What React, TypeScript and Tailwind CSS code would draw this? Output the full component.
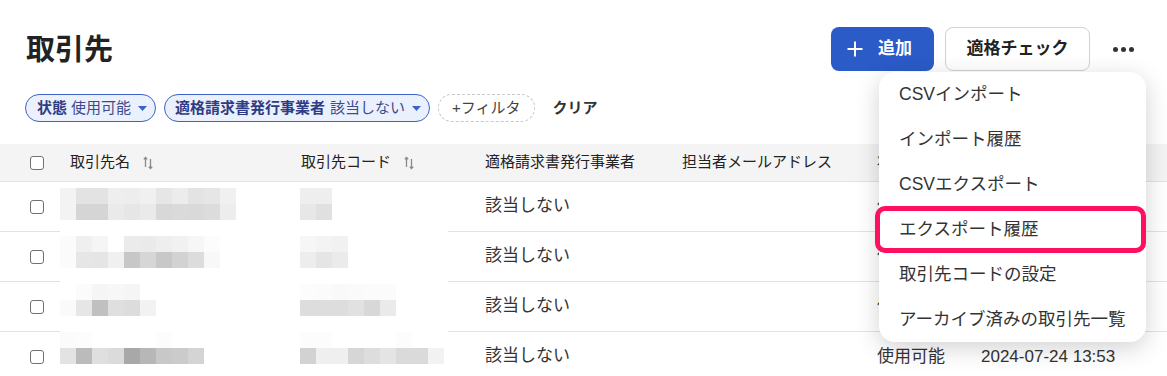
import React from "react";

const FONT = { fontFamily: '"Liberation Sans", "Noto Sans CJK JP", sans-serif' };

// redaction mosaic: one entry per 16px band, grays for the name and code cells
const MOSAIC: { name: string[]; code: string[] }[] = [
  { name: ["f3", "e3", "e3", "ee", "ed", "f0", "e6", "ec", "e3", "e6", "f0"], code: ["ee", "ee"] },
  { name: ["f3", "d5", "d5", "ea", "e6", "ea", "d8", "da", "d9", "dc", "ed"], code: ["e7", "e0"] },
  { name: [], code: [] },
  { name: ["fb", "ef", "f5", "ff", "eb", "ea", "ee", "f1", "f6", "fc"], code: ["f6", "f3", "f1"] },
  { name: ["fb", "e6", "e5", "f0", "c7", "d6", "c8", "d2", "dc", "f8"], code: ["ed", "e5", "eb"] },
  { name: [], code: [] },
  { name: ["ff", "fb", "f5", "f7", "f5"], code: ["fc", "fb", "f9", "fa", "fb", "fb"] },
  { name: ["fa", "e6", "c0", "df", "dc", "f2"], code: ["dd", "dd", "dd", "e1", "d8", "ea"] },
  { name: [], code: [] },
  { name: ["fb", "fc", "ff", "ff", "ff", "ff", "fc", "ff", "ff"], code: ["fc", "fc", "ff", "ff", "ff", "ff", "fc", "ff", "ff"] },
  { name: ["e3", "bb", "df", "db", "a8", "b7", "c8", "cb", "d4"], code: ["d2", "ef", "ef", "d6", "dd", "e4", "da", "da", "f2"] },
];

const MENU = [
  "CSVインポート",
  "インポート履歴",
  "CSVエクスポート",
  "エクスポート履歴",
  "取引先コードの設定",
  "アーカイブ済みの取引先一覧",
];

const COLS = "grid grid-cols-[70px_231px_184px_197px_195px_104px_1fr]";

function Checkbox() {
  return <div className="ml-[30px] h-[14px] w-[14px] rounded-[3px] border-[1.5px] border-[#707070] bg-white" />;
}

function SortIcon() {
  return (
    <svg width="12" height="14" viewBox="0 0 12 14" className="ml-[12px]" fill="none" stroke="#8a8a8a" strokeWidth="1.3">
      <path d="M3.5 11V1.5M1.8 3.2L3.5 1.5L5.2 3.2" />
      <path d="M8.5 3V12.5M6.8 10.8L8.5 12.5L10.2 10.8" />
    </svg>
  );
}

function Caret() {
  return (
    <svg width="9" height="5" viewBox="0 0 9 5" className="ml-[7px]">
      <path d="M0 0H9L4.5 5Z" fill="#3b63c7" />
    </svg>
  );
}

function Row() {
  return (
    <div className={`${COLS} h-[50px] items-center border-b border-[#e2e2e2] text-[17px] text-[#333]`}>
      <Checkbox />
      <div />
      <div />
      <div className="-mt-[2px]">該当しない</div>
      <div />
      <div>使用可能</div>
      <div>2024-07-24 13:53</div>
    </div>
  );
}

export default function App() {
  return (
    <div className="relative h-[376px] w-[1167px] overflow-hidden bg-white" style={FONT}>
      {/* Title + actions */}
      <div className="flex h-[71px] items-end justify-between pl-[26px] pr-[24px]">
        <h1 className="mb-[6px] text-[29px] font-bold leading-none text-[#222]">取引先</h1>
        <div className="flex items-center">
          <button className="flex h-[44px] w-[103px] items-center rounded-[8px] bg-[#2a5bc7] pl-[16px] text-[17px] font-bold text-white">
            <svg width="16" height="16" viewBox="0 0 16 16" stroke="white" strokeWidth="2">
              <path d="M8 0.5V15.5M0.5 8H15.5" />
            </svg>
            <span className="ml-[15px]">追加</span>
          </button>
          <button className="ml-[11px] h-[44px] w-[145px] rounded-[8px] border border-[#d2d2d2] bg-white text-[17px] font-bold text-[#222]">
            適格チェック
          </button>
          <div className="ml-[13px] flex w-[40px] items-center justify-center gap-[3px]">
            <span className="h-[5px] w-[5px] rounded-full bg-[#333]" />
            <span className="h-[5px] w-[5px] rounded-full bg-[#333]" />
            <span className="h-[5px] w-[5px] rounded-full bg-[#333]" />
          </div>
        </div>
      </div>

      {/* Filters */}
      <div className="mt-[23px] flex h-[28px] items-center pl-[25px] text-[15px]">
        <div className="flex h-[28px] items-center rounded-full border border-[#3b63c7] bg-[#eaf1fd] pl-[11px] pr-[8px] text-[#2e3c86]">
          <span className="font-bold">状態</span>
          <span className="ml-[4px] text-[#3c4a8e]">使用可能</span>
          <Caret />
        </div>
        <div className="ml-[8px] flex h-[28px] items-center rounded-full border border-[#3b63c7] bg-[#eaf1fd] pl-[10px] pr-[8px] text-[#2e3c86]">
          <span className="font-bold">適格請求書発行事業者</span>
          <span className="ml-[5px] text-[#3c4a8e]">該当しない</span>
          <Caret />
        </div>
        <div className="ml-[8px] flex h-[28px] items-center rounded-full border border-dashed border-[#c8c8c8] px-[13px] text-[#444]">
          +フィルタ
        </div>
        <div className="ml-[18px] font-bold text-[#333]">クリア</div>
      </div>

      {/* Table */}
      <div className="mt-[22px]">
        <div className={`${COLS} h-[38px] items-center border-b border-[#e2e2e2] bg-[#f5f4f5] text-[15px] text-[#222]`}>
          <Checkbox />
          <div className="flex items-center">
            取引先名
            <SortIcon />
          </div>
          <div className="flex items-center">
            取引先コード
            <SortIcon />
          </div>
          <div>適格請求書発行事業者</div>
          <div>担当者メールアドレス</div>
          <div>状態</div>
          <div>更新日時</div>
        </div>
        <Row />
        <Row />
        <Row />
        <Row />
      </div>

      {/* Redaction mosaic over names and codes */}
      <div className="absolute left-[60px] top-[182px] h-[194px] w-[388px] bg-white pt-[6px]">
        {MOSAIC.map((r, i) => (
          <div key={i} className="flex h-[16px]">
            <div className="flex w-[240px]">
              {r.name.map((c, j) => (
                <div key={j} className="h-[16px] w-[16px]" style={{ background: `#${c}${c}${c}` }} />
              ))}
            </div>
            <div className="flex">
              {r.code.map((c, j) => (
                <div key={j} className="h-[16px] w-[16px]" style={{ background: `#${c}${c}${c}` }} />
              ))}
            </div>
          </div>
        ))}
      </div>

      {/* Dropdown menu */}
      <div className="absolute left-[879px] top-[72px] w-[267px] rounded-[16px] bg-white shadow-[0_6px_24px_rgba(0,0,0,0.18)]">
        {MENU.map((m) => (
          <div key={m} className="flex h-[45px] items-center pl-[20px] text-[17.5px] text-[#333]">
            {m}
          </div>
        ))}
      </div>

      {/* Annotation highlight */}
      <div className="absolute left-[875px] top-[206px] h-[47px] w-[271px] rounded-[10px] border-[5px] border-[#ff0f5f]" />
    </div>
  );
}
